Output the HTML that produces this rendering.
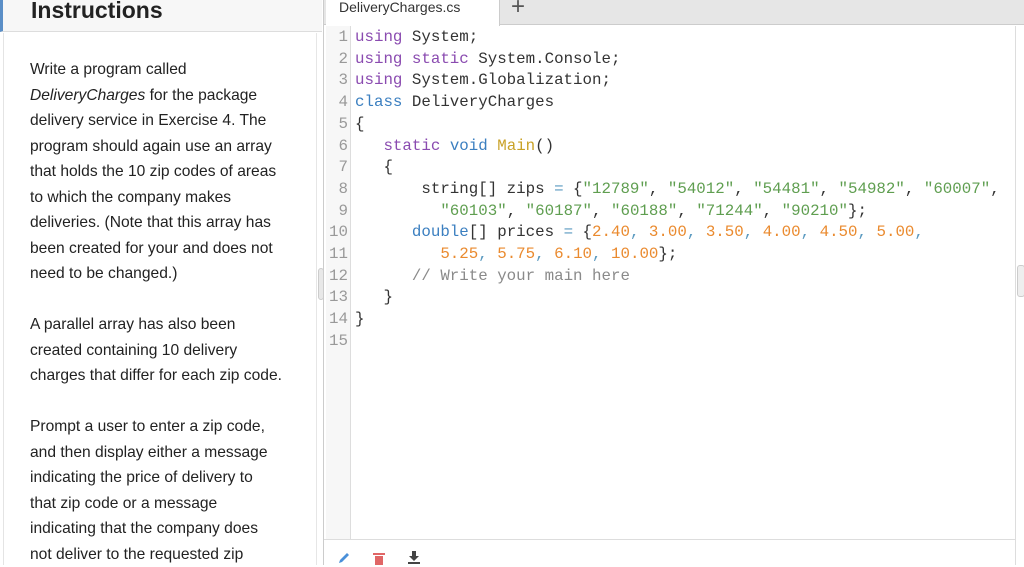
<!DOCTYPE html>
<html><head><meta charset="utf-8"><style>
*{margin:0;padding:0;box-sizing:border-box}
body{width:1024px;height:565px;overflow:hidden;background:#fff;position:relative;font-family:"Liberation Sans",sans-serif}
.hdr{position:absolute;left:0;top:0;width:322px;height:32px;background:#f7f7f7;border-bottom:1px solid #ddd;border-left:3px solid #5b8fc7}
.hdr h1{position:absolute;left:28px;top:-3px;font-size:23px;font-weight:bold;color:#222}
.lp{position:absolute;left:3px;top:33px;width:313px;height:532px;background:#fff;border-left:1px solid #e4e4e4}
.lp p{position:absolute;left:26px;font-size:15.6px;line-height:25.5px;color:#222;white-space:nowrap}
.sb{position:absolute;left:316px;top:33px;width:7px;height:532px;background:#fff;border-left:1px solid #e6e6e6}
.sb div{position:absolute;left:1px;top:235px;width:6px;height:32px;background:#e8e8e8;border:1px solid #ccc;border-radius:3px}
.ed{position:absolute;left:323px;top:0;width:701px;height:565px;border-left:1px solid #ccc}
.tabs{position:absolute;left:0;top:0;width:701px;height:25px;background:#e6e6e6;border-bottom:1px solid #ccc}
.tab{position:absolute;left:2px;top:0;width:174px;height:26px;background:#fff;border-right:1px solid #ccc;font-size:14px;color:#333;padding:0 0 0 13px;line-height:14px}
.plus{position:absolute;left:187px;top:-7px;font-size:24px;color:#555;font-weight:300}
.gut{position:absolute;left:2px;top:26px;width:25px;height:513px;background:#f7f7f7;border-right:1px solid #ddd}
.code{position:absolute;left:0;top:27px;font-family:"Liberation Mono",monospace;font-size:15.8px;line-height:21.7px;white-space:pre;color:#333}
.ln{display:inline-block;width:25px;text-align:right;color:#999;padding-right:1px}
.c{padding-left:6px}
.k{color:#8a4bb0}.b{color:#3b7fc0}.y{color:#c9a227}.s{color:#5f9e50}.n{color:#ea8a2e}.cm{color:#8a8a8a}.p{color:#5b9ac0}
.bot{position:absolute;left:0;top:539px;width:691px;height:26px;border-top:1px solid #ddd;background:#fff}
.rsb{position:absolute;left:691px;top:26px;width:10px;height:539px;background:#fff;border-left:1px solid #ddd}
.rsb div{position:absolute;left:1px;top:239px;width:8px;height:32px;background:#eee;border:1px solid #ccc;border-radius:3px}
</style></head><body>
<div class="hdr"><h1>Instructions</h1></div>
<div class="lp">
<p style="top:24px">Write a program called<br><i>DeliveryCharges</i> for the package<br>delivery service in Exercise <b style="font-weight:normal">4</b>. The<br>program should again use an array<br>that holds the 10 zip codes of areas<br>to which the company makes<br>deliveries. (Note that this array has<br>been created for your and does not<br>need to be changed.)</p>
<p style="top:279px">A parallel array has also been<br>created containing 10 delivery<br>charges that differ for each zip code.</p>
<p style="top:381px">Prompt a user to enter a zip code,<br>and then display either a message<br>indicating the price of delivery to<br>that zip code or a message<br>indicating that the company does<br>not deliver to the requested zip</p>
</div>
<div class="sb"><div></div></div>
<div class="ed">
<div class="tabs"><div class="tab">DeliveryCharges.cs</div><div class="plus">+</div></div>
<div class="gut"></div>
<div class="code"><span class="ln">1</span><span class="c"><span class="k">using</span> System;</span>
<span class="ln">2</span><span class="c"><span class="k">using</span> <span class="k">static</span> System.Console;</span>
<span class="ln">3</span><span class="c"><span class="k">using</span> System.Globalization;</span>
<span class="ln">4</span><span class="c"><span class="b">class</span> DeliveryCharges</span>
<span class="ln">5</span><span class="c">{</span>
<span class="ln">6</span><span class="c">   <span class="k">static</span> <span class="b">void</span> <span class="y">Main</span>()</span>
<span class="ln">7</span><span class="c">   {</span>
<span class="ln">8</span><span class="c">       string[] zips <span class="p">=</span> {<span class="s">"12789"</span>, <span class="s">"54012"</span>, <span class="s">"54481"</span>, <span class="s">"54982"</span>, <span class="s">"60007"</span>,</span>
<span class="ln">9</span><span class="c">         <span class="s">"60103"</span>, <span class="s">"60187"</span>, <span class="s">"60188"</span>, <span class="s">"71244"</span>, <span class="s">"90210"</span>};</span>
<span class="ln">10</span><span class="c">      <span class="b">double</span>[] prices <span class="p">=</span> {<span class="n">2.40</span><span class="p">,</span> <span class="n">3.00</span><span class="p">,</span> <span class="n">3.50</span><span class="p">,</span> <span class="n">4.00</span><span class="p">,</span> <span class="n">4.50</span><span class="p">,</span> <span class="n">5.00</span><span class="p">,</span></span>
<span class="ln">11</span><span class="c">         <span class="n">5.25</span><span class="p">,</span> <span class="n">5.75</span><span class="p">,</span> <span class="n">6.10</span><span class="p">,</span> <span class="n">10.00</span>};</span>
<span class="ln">12</span><span class="c">      <span class="cm">// Write your main here</span></span>
<span class="ln">13</span><span class="c">   }</span>
<span class="ln">14</span><span class="c">}</span>
<span class="ln">15</span></div>
<div class="bot">
<svg style="position:absolute;left:13px;top:11px" width="14" height="14" viewBox="0 0 14 14"><path d="M2 12 L3 9 L10 2 L12 4 L5 11 Z" fill="#4a90d9"/></svg>
<svg style="position:absolute;left:49px;top:12px" width="12" height="13" viewBox="0 0 12 13"><rect x="0" y="1" width="12" height="2" fill="#e06666"/><rect x="2" y="4" width="8" height="9" fill="#e06666"/></svg>
<svg style="position:absolute;left:84px;top:11px" width="12" height="14" viewBox="0 0 12 14"><path d="M4 0h4v5h3L6 10 1 5h3z" fill="#444"/><rect x="0" y="11" width="12" height="2" fill="#444"/></svg>
</div>
<div class="rsb"><div></div></div>
</div>
</body></html>
